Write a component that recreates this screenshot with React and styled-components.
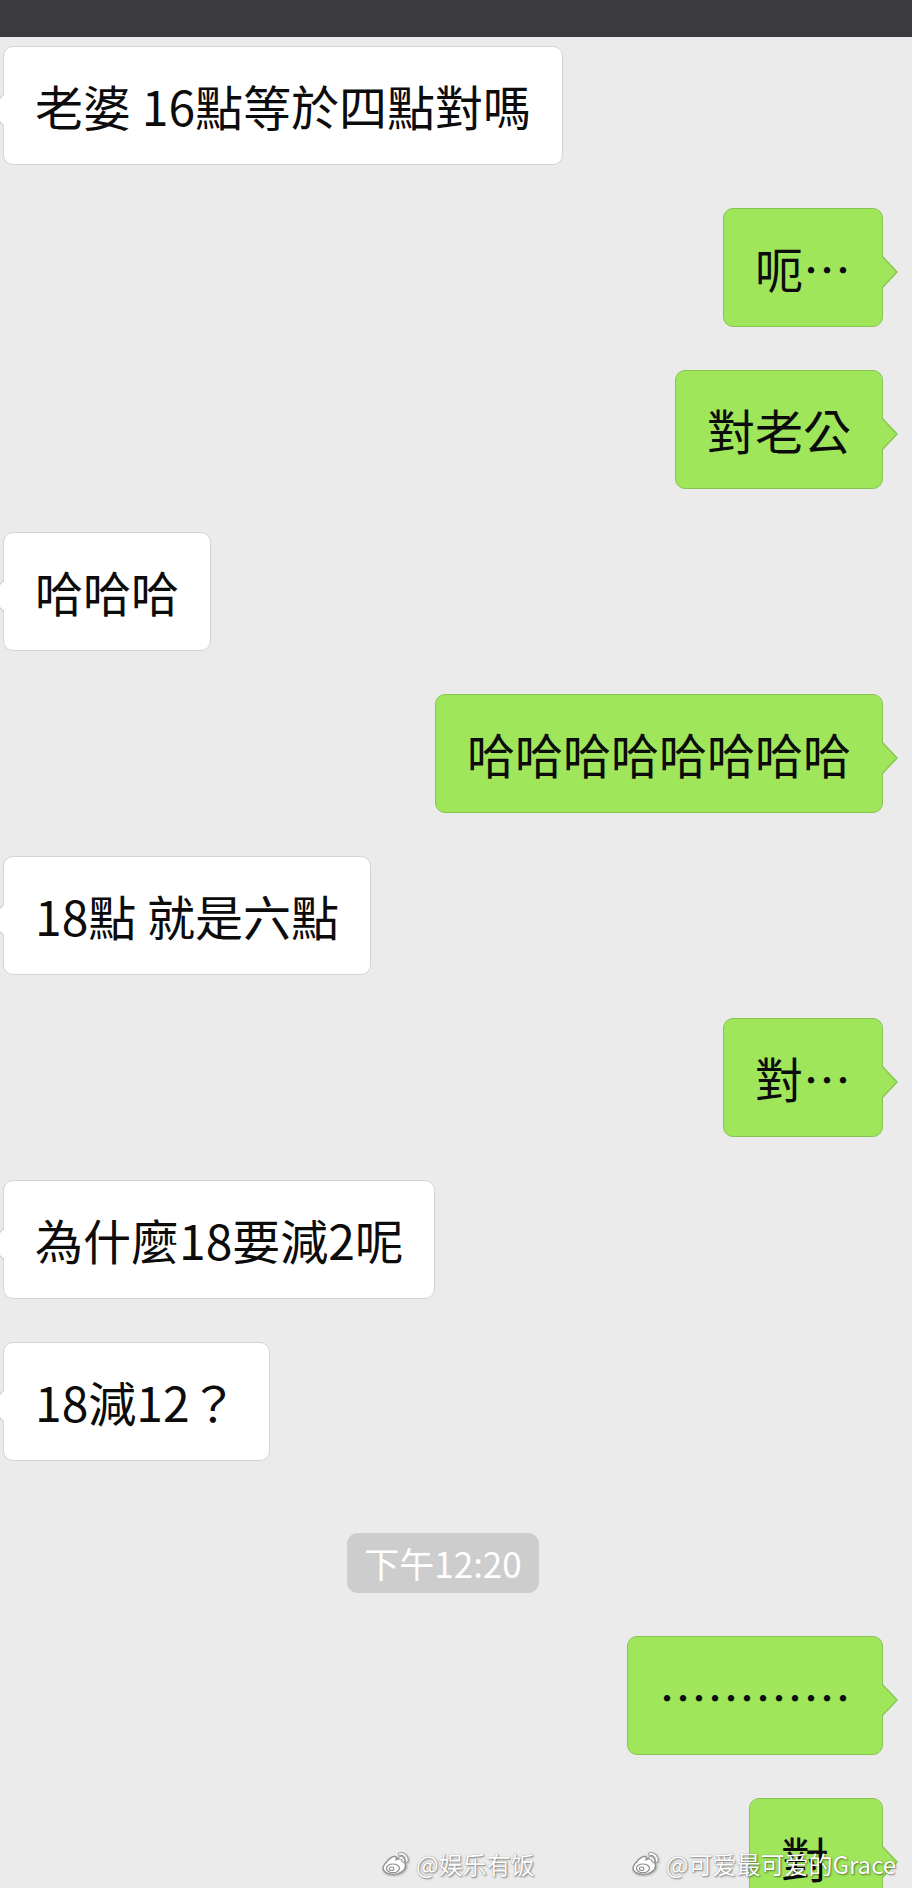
import React from "react";
import styled, { createGlobalStyle } from "styled-components";

const GlobalStyle = createGlobalStyle`
  html, body {
    margin: 0;
    padding: 0;
    background: #ebebeb;
  }
`;

const Page = styled.div`
  position: relative;
  width: 912px;
  height: 1888px;
  overflow: hidden;
  background: #ebebeb;
  font-family: "Noto Sans CJK TC", "Noto Sans CJK SC", "Noto Sans", sans-serif;
  color: #0c0c0c;
`;

const TopBar = styled.div`
  height: 37px;
  background: #3b3a3f;
`;

const Chat = styled.div`
  display: flex;
  flex-direction: column;
  gap: 43px;
  padding-top: 9px;
`;

const Row = styled.div`
  display: flex;
  justify-content: ${(p) => (p.$mine ? "flex-end" : "flex-start")};
  padding: ${(p) => (p.$mine ? "0 29px 0 0" : "0 0 0 3px")};
`;

const Bubble = styled.div`
  position: relative;
  box-sizing: border-box;
  min-width: 134px;
  height: 119px;
  padding: 28px 31px;
  font-size: 48px;
  line-height: 61px;
  white-space: nowrap;
  background: ${(p) => (p.$mine ? "#9fe65b" : "#ffffff")};
  border: 1px solid ${(p) => (p.$mine ? "#88c652" : "#d4d4d4")};
  border-radius: 10px;

  &::before,
  &::after {
    content: "";
    position: absolute;
    width: 0;
    height: 0;
  }
  &::before {
    top: 46px;
    ${(p) => (p.$mine ? "right: -16px;" : "left: -16px;")}
    border-top: 17px solid transparent;
    border-bottom: 17px solid transparent;
    ${(p) =>
      p.$mine
        ? "border-left: 16px solid #88c652;"
        : "border-right: 16px solid #d4d4d4;"}
  }
  &::after {
    top: 47px;
    ${(p) => (p.$mine ? "right: -14px;" : "left: -14px;")}
    border-top: 16px solid transparent;
    border-bottom: 16px solid transparent;
    ${(p) =>
      p.$mine
        ? "border-left: 15px solid #9fe65b;"
        : "border-right: 15px solid #ffffff;"}
  }
`;

const TimeRow = styled.div`
  display: flex;
  justify-content: center;
  padding-right: 26px;
  margin-top: 29px;
`;

const TimeTag = styled.div`
  height: 60px;
  padding: 0 17px;
  border-radius: 11px;
  background: #cdcdcd;
  color: #ffffff;
  font-size: 35px;
  line-height: 60px;
`;

/* weibo watermarks laid over the bottom of the screenshot */
const Watermarks = styled.div`
  position: absolute;
  left: 381px;
  bottom: 10px;
  display: flex;
  align-items: center;
  gap: 96px;
`;

const Mark = styled.div`
  display: flex;
  align-items: center;
  gap: 5px;
  font-family: "Noto Sans CJK SC", "Noto Sans", sans-serif;
  font-size: 24px;
  line-height: 28px;
  color: #ffffff;
  text-shadow: 1px 1px 2px rgba(0, 0, 0, 0.45), 0 0 1px rgba(0, 0, 0, 0.4);
  white-space: nowrap;
`;

const WeiboLogo = () => (
  <svg width="30" height="26" viewBox="0 0 34 30">
    <g
      strokeLinecap="round"
      style={{ filter: "drop-shadow(1px 1px 1px rgba(0,0,0,0.35))" }}
    >
      <path
        d="M6 13c3-5 9-8 11-6 1 1 0 3 0 3s4-2 6-1c2 1 1 3 1 3 3 1 4 3 4 5 0 5-7 10-14 10C7 27 2 24 2 20c0-2 1-4 4-7z"
        fill="#ffffff"
        stroke="#8e8e8e"
        strokeWidth="1.5"
      />
      <ellipse cx="13.5" cy="20" rx="7.5" ry="5" fill="#ffffff" stroke="#8e8e8e" strokeWidth="1.4" />
      <ellipse cx="12" cy="20.5" rx="2.6" ry="2" fill="none" stroke="#8e8e8e" strokeWidth="1.3" />
      <path d="M21 3.5c5-1 9 3 8.5 8" fill="none" stroke="#8e8e8e" strokeWidth="3.6" />
      <path d="M21 3.5c5-1 9 3 8.5 8" fill="none" stroke="#ffffff" strokeWidth="2" />
      <path d="M21.5 8c2.5-.5 4.5 1.5 4 4" fill="none" stroke="#8e8e8e" strokeWidth="3.4" />
      <path d="M21.5 8c2.5-.5 4.5 1.5 4 4" fill="none" stroke="#ffffff" strokeWidth="1.8" />
    </g>
  </svg>
);

const messages = [
  { mine: false, text: "老婆 16點等於四點對嗎" },
  { mine: true, text: "呃…" },
  { mine: true, text: "對老公" },
  { mine: false, text: "哈哈哈" },
  { mine: true, text: "哈哈哈哈哈哈哈哈" },
  { mine: false, text: "18點 就是六點" },
  { mine: true, text: "對…" },
  { mine: false, text: "為什麼18要減2呢" },
  { mine: false, text: "18減12？" },
];

const later = [
  { mine: true, text: "…………" },
  { mine: true, text: "對" },
];

const App = () => {
  return (
    <>
      <GlobalStyle />
      <Page>
        <TopBar />
        <Chat>
          {messages.map((m, i) => (
            <Row key={i} $mine={m.mine}>
              <Bubble $mine={m.mine}>{m.text}</Bubble>
            </Row>
          ))}
          <TimeRow>
            <TimeTag>下午12:20</TimeTag>
          </TimeRow>
          {later.map((m, i) => (
            <Row key={"l" + i} $mine={m.mine}>
              <Bubble $mine={m.mine}>{m.text}</Bubble>
            </Row>
          ))}
        </Chat>
        <Watermarks>
          <Mark>
            <WeiboLogo />
            @娱乐有饭
          </Mark>
          <Mark>
            <WeiboLogo />
            @可爱最可爱的Grace
          </Mark>
        </Watermarks>
      </Page>
    </>
  );
};

export default App;
